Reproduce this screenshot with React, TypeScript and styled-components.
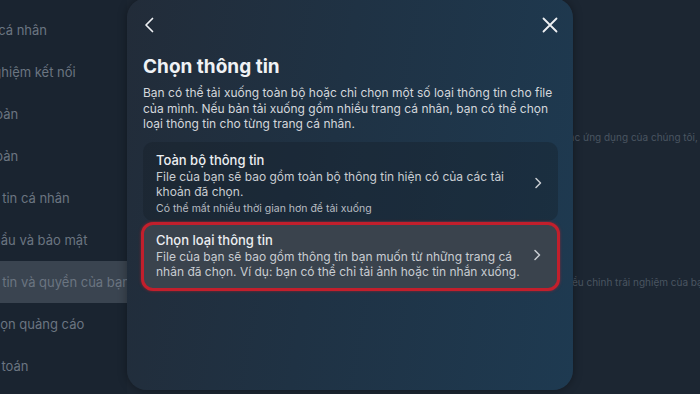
import React from "react";
import styled, { createGlobalStyle } from "styled-components";

const GlobalStyle = createGlobalStyle`
  html, body {
    margin: 0;
    padding: 0;
    background: #1b2530;
  }
  body {
    font-family: "Inter", "Noto Sans", sans-serif;
  }
`;

const Page = styled.div`
  position: relative;
  display: flex;
  width: 700px;
  height: 394px;
  overflow: hidden;
  background: #1c2632;
`;

const Sidebar = styled.nav`
  width: 127px;
  flex-shrink: 0;
  overflow: hidden;
  padding-top: 9px;
  background: #1a2430;
`;

const NavItem = styled.div<{ $active?: boolean }>`
  height: 42px;
  display: flex;
  align-items: center;
  margin-left: -41px;
  width: 168px;
  box-sizing: border-box;
  white-space: nowrap;
  font-size: 13px;
  color: #6b7581;
  background: ${({ $active }) => ($active ? "#3a4450" : "transparent")};
`;

const Main = styled.main`
  flex: 1;
  display: flex;
  flex-direction: column;
  padding-left: 436px;
  white-space: nowrap;
  font-size: 10px;
  color: #4a5561;
`;

const MainLine = styled.div<{ $top: number }>`
  margin-top: ${({ $top }) => $top}px;
  line-height: 14px;
`;

const Modal = styled.section`
  position: absolute;
  left: 127px;
  top: -2px;
  width: 446px;
  height: 392px;
  border-radius: 20px;
  background: linear-gradient(100deg, #222c39 0%, #1f3244 45%, #1e3a51 100%);
  box-shadow: 0 0 10px rgba(0, 0, 0, 0.35);
  display: flex;
  flex-direction: column;
  padding: 0 15px 0 16px;
  box-sizing: border-box;
  color: #e4e6eb;
`;

const Header = styled.header`
  height: 54px;
  display: flex;
  align-items: center;
  justify-content: space-between;
`;

const IconButton = styled.button<{ $w: number }>`
  background: none;
  border: none;
  padding: 0;
  width: ${({ $w }) => $w}px;
  height: 20px;
  display: flex;
  align-items: center;
  justify-content: center;
  color: #eef0f3;
`;

const Title = styled.h1`
  margin: 4px 0 0;
  font-size: 19px;
  font-weight: 700;
  line-height: 22px;
  color: #f0f2f5;
`;

const Description = styled.p`
  margin: 7px 0 0;
  font-size: 12px;
  line-height: 15.5px;
  white-space: nowrap;
  color: #d4d7dc;
`;

const Options = styled.div`
  margin-top: 10px;
  display: flex;
  flex-direction: column;
  gap: 1px;
`;

const Option = styled.div<{ $selected?: boolean }>`
  display: flex;
  align-items: center;
  padding: ${({ $selected }) => ($selected ? "6px 12px 8px 12px" : "9px 12px 5px 13px")};
  margin: ${({ $selected }) => ($selected ? "0 -2px" : "0")};
  border-radius: ${({ $selected }) => ($selected ? "12px" : "10px")};
  background: ${({ $selected }) => ($selected ? "#3a434d" : "rgba(20, 28, 36, 0.35)")};
  border: ${({ $selected }) => ($selected ? "3px solid #c21f2c" : "none")};
  box-shadow: ${({ $selected }) => ($selected ? "0 0 3px rgba(200, 30, 40, 0.6)" : "none")};
`;

const OptionText = styled.div`
  flex: 1;
  display: flex;
  flex-direction: column;
  white-space: nowrap;
`;

const OptionTitle = styled.div`
  font-size: 13px;
  font-weight: 500;
  line-height: 18px;
  color: #eceef1;
`;

const OptionDesc = styled.div`
  font-size: 12px;
  line-height: 15.5px;
  color: #c9cdd2;
`;

const OptionNote = styled.div`
  margin-top: 2px;
  font-size: 10.5px;
  line-height: 14px;
  color: #b8bcc2;
`;

const Chevron = styled.div`
  width: 16px;
  display: flex;
  justify-content: center;
  color: #c9cdd2;
`;

const ChevronRight = () => (
  <svg width="8" height="12" viewBox="0 0 8 12" fill="none">
    <path d="M2 1.5 L6.5 6 L2 10.5" stroke="currentColor" strokeWidth="1.5" strokeLinecap="round" strokeLinejoin="round" />
  </svg>
);

const navItems = [
  "Trang cá nhân",
  "Trải nghiệm kết nối",
  "Tài khoản",
  "Tài khoản",
  "Thông tin cá nhân",
  "Mật khẩu và bảo mật",
  "Thông tin và quyền của bạn",
  "Tùy chọn quảng cáo",
  "Thanh toán",
];

export default function App() {
  return (
    <>
      <GlobalStyle />
      <Page>
        <Sidebar>
          {navItems.map((item, i) => (
            <NavItem key={i} $active={i === 6}>
              {item}
            </NavItem>
          ))}
        </Sidebar>
        <Main>
          <MainLine $top={130}>các ứng dụng của chúng tôi, bao gồm</MainLine>
          <MainLine $top={131}>điều chỉnh trải nghiệm của bạn</MainLine>
        </Main>
        <Modal>
          <Header>
            <IconButton $w={12} aria-label="Quay lại">
              <svg width="10" height="16" viewBox="0 0 10 16" fill="none">
                <path d="M8.5 1.5 L2 8 L8.5 14.5" stroke="currentColor" strokeWidth="1.7" strokeLinecap="round" strokeLinejoin="round" />
              </svg>
            </IconButton>
            <IconButton $w={16} aria-label="Đóng">
              <svg width="16" height="16" viewBox="0 0 16 16" fill="none">
                <path d="M1.5 1.5 L14.5 14.5 M14.5 1.5 L1.5 14.5" stroke="currentColor" strokeWidth="1.8" strokeLinecap="round" />
              </svg>
            </IconButton>
          </Header>
          <Title>Chọn thông tin</Title>
          <Description>
            Bạn có thể tải xuống toàn bộ hoặc chỉ chọn một số loại thông tin cho file
            <br />
            của mình. Nếu bản tải xuống gồm nhiều trang cá nhân, bạn có thể chọn
            <br />
            loại thông tin cho từng trang cá nhân.
          </Description>
          <Options>
            <Option>
              <OptionText>
                <OptionTitle>Toàn bộ thông tin</OptionTitle>
                <OptionDesc>
                  File của bạn sẽ bao gồm toàn bộ thông tin hiện có của các tài
                  <br />
                  khoản đã chọn.
                </OptionDesc>
                <OptionNote>Có thể mất nhiều thời gian hơn để tải xuống</OptionNote>
              </OptionText>
              <Chevron>
                <ChevronRight />
              </Chevron>
            </Option>
            <Option $selected>
              <OptionText>
                <OptionTitle>Chọn loại thông tin</OptionTitle>
                <OptionDesc>
                  File của bạn sẽ bao gồm thông tin bạn muốn từ những trang cá
                  <br />
                  nhân đã chọn. Ví dụ: bạn có thể chỉ tải ảnh hoặc tin nhắn xuống.
                </OptionDesc>
              </OptionText>
              <Chevron>
                <ChevronRight />
              </Chevron>
            </Option>
          </Options>
        </Modal>
      </Page>
    </>
  );
}
